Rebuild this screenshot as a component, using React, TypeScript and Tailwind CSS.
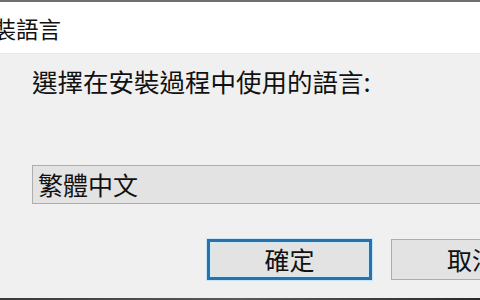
import React from "react";

const cjk = { fontFamily: '"Noto Sans CJK TC", "Noto Sans CJK SC", sans-serif' };

export default function App() {
  return (
    <div
      className="w-[480px] h-[300px] overflow-hidden flex flex-col bg-[#f0f0f0] text-[#111]"
      style={cjk}
    >
      <div className="h-[2px] bg-[#6f6f6f] shrink-0" />
      <div className="h-[52px] bg-white shrink-0 border-b border-[#e8e8e8] overflow-hidden">
        <div className="ml-[-29px] pt-[15px] text-[22.5px] leading-none whitespace-nowrap">
          安裝語言
        </div>
      </div>
      <div className="flex-1 flex flex-col pl-[32px] overflow-hidden">
        <div className="mt-[14px] text-[25.5px] leading-none whitespace-nowrap">
          選擇在安裝過程中使用的語言:
        </div>
        <div className="mt-[71px] h-[39px] w-[470px] border border-[#adadad] bg-[#e3e3e3] flex items-center pl-[5px] text-[25px] leading-none whitespace-nowrap">
          繁體中文
        </div>
        <div className="mt-[35px] flex gap-[19px] ml-[175px] whitespace-nowrap">
          <div className="w-[165px] h-[41px] shrink-0 border-[3px] border-[#2c70a8] bg-[#e3e3e3] shadow-[0_0_0_1px_#c6e6f8,inset_0_0_0_1px_#cfe9f7] flex items-center justify-center text-[25px] leading-none">
            確定
          </div>
          <div className="w-[165px] h-[41px] shrink-0 border border-[#adadad] bg-[#e3e3e3] flex items-center justify-start pl-[55px] text-[25px] leading-none">
            取消
          </div>
        </div>
      </div>
      <div className="h-[2px] shrink-0 bg-gradient-to-r from-[#3a3a3a] via-[#5a5a5a] to-[#2a2a2a]" />
    </div>
  );
}
